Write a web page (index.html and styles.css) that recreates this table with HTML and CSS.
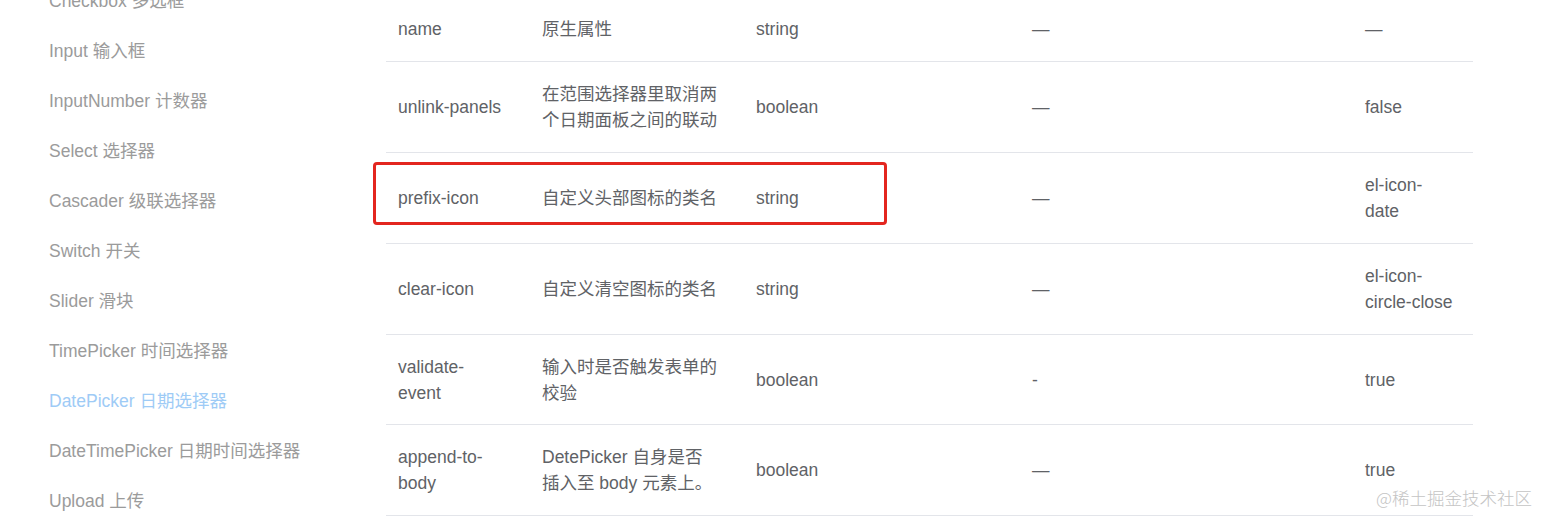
FILE: index.html
```html
<!DOCTYPE html>
<html lang="zh-CN">
<head>
<meta charset="utf-8">
<title>DatePicker 日期选择器</title>
<link rel="stylesheet" href="styles.css">
</head>
<body>
<div class="page">
  <nav class="sidebar">
    <ul class="nav-list">
      <li class="nav-item">Checkbox 多选框</li>
      <li class="nav-item">Input 输入框</li>
      <li class="nav-item">InputNumber 计数器</li>
      <li class="nav-item">Select 选择器</li>
      <li class="nav-item">Cascader 级联选择器</li>
      <li class="nav-item">Switch 开关</li>
      <li class="nav-item">Slider 滑块</li>
      <li class="nav-item">TimePicker 时间选择器</li>
      <li class="nav-item active">DatePicker 日期选择器</li>
      <li class="nav-item">DateTimePicker 日期时间选择器</li>
      <li class="nav-item">Upload 上传</li>
    </ul>
  </nav>
  <main class="content">
    <div class="table">
      <div class="row">
        <div class="cell c1">name</div>
        <div class="cell c2">原生属性</div>
        <div class="cell c3">string</div>
        <div class="cell c4">—</div>
        <div class="cell c5">—</div>
      </div>
      <div class="row">
        <div class="cell c1">unlink-panels</div>
        <div class="cell c2">在范围选择器里取消两个日期面板之间的联动</div>
        <div class="cell c3">boolean</div>
        <div class="cell c4">—</div>
        <div class="cell c5">false</div>
      </div>
      <div class="row highlighted">
        <div class="cell c1">prefix-icon</div>
        <div class="cell c2">自定义头部图标的类名</div>
        <div class="cell c3">string</div>
        <div class="cell c4">—</div>
        <div class="cell c5">el-icon-date</div>
        <div class="mark"></div>
      </div>
      <div class="row">
        <div class="cell c1">clear-icon</div>
        <div class="cell c2">自定义清空图标的类名</div>
        <div class="cell c3">string</div>
        <div class="cell c4">—</div>
        <div class="cell c5">el-icon-circle-close</div>
      </div>
      <div class="row row-tight">
        <div class="cell c1">validate-event</div>
        <div class="cell c2">输入时是否触发表单的校验</div>
        <div class="cell c3">boolean</div>
        <div class="cell c4">-</div>
        <div class="cell c5">true</div>
      </div>
      <div class="row">
        <div class="cell c1">append-to-body</div>
        <div class="cell c2">DetePicker 自身是否插入至 body 元素上。</div>
        <div class="cell c3">boolean</div>
        <div class="cell c4">—</div>
        <div class="cell c5">true</div>
      </div>
    </div>
  </main>
  <div class="watermark">@稀土掘金技术社区</div>
</div>
</body>
</html>
```
FILE: styles.css
```css
* {
  box-sizing: border-box;
}

html, body {
  margin: 0;
  padding: 0;
  background: #ffffff;
  overflow: hidden;
}

body {
  font-family: "Liberation Sans", "Noto Sans CJK SC", sans-serif;
  font-size: 17.5px;
}

.page {
  position: relative;
  display: flex;
  align-items: flex-start;
  width: 1541px;
  height: 516px;
  overflow: hidden;
}

.sidebar {
  width: 386px;
  flex: none;
  padding-left: 49px;
  margin-top: -24px;
}

.nav-list {
  list-style: none;
  margin: 0;
  padding: 0;
}

.nav-item {
  height: 50px;
  line-height: 50px;
  color: #9b9b9b;
  white-space: nowrap;
}

.nav-item.active {
  color: #9ecbf6;
}

.content {
  flex: none;
  margin-top: -3px;
}

.table {
  width: 1087px;
}

.row {
  position: relative;
  display: grid;
  grid-template-columns: 144px 214px 276px 333px 120px;
  align-items: center;
  border-bottom: 1px solid #e3e5ea;
  color: #606266;
  line-height: 26px;
}

.cell {
  padding: 19px 0 19px 12px;
  word-break: normal;
  overflow-wrap: normal;
}

.row-tight .cell {
  padding-top: 18.5px;
  padding-bottom: 18.5px;
}

.c1 {
  padding-right: 26px;
}

.c2 {
  padding-right: 25px;
}

.c5 {
  padding-right: 19px;
}

.mark {
  position: absolute;
  left: -13px;
  top: 9px;
  width: 514px;
  height: 63px;
  border: 3px solid #e3261f;
  border-radius: 4px;
  pointer-events: none;
}

.watermark {
  position: absolute;
  right: 9px;
  top: 485px;
  font-family: "Noto Sans CJK SC", sans-serif;
  font-weight: 300;
  font-size: 17.5px;
  color: #c4c4c4;
  white-space: nowrap;
}
```
